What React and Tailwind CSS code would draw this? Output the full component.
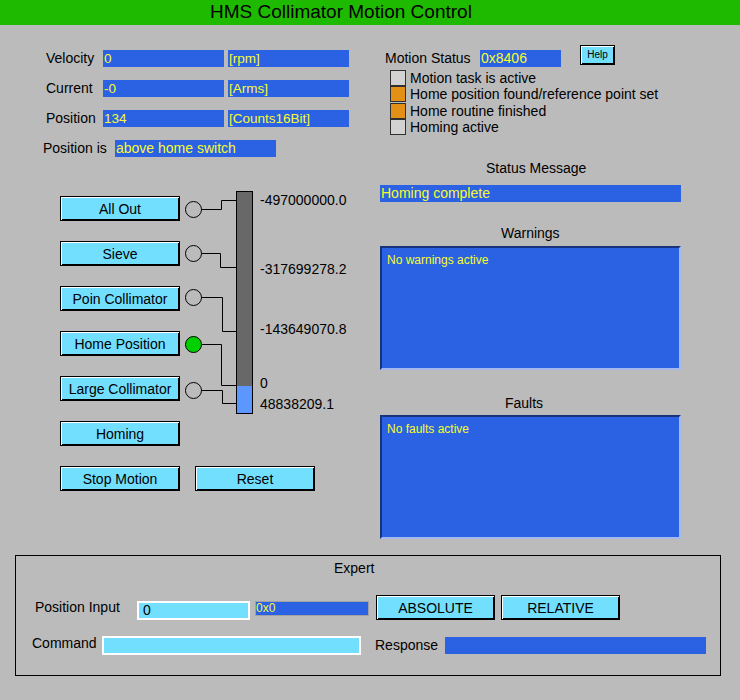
import React from 'react';

const btn =
  'flex items-center justify-center bg-[#73dfff] border border-black shadow-[inset_1px_1px_0_#ffffff,inset_-1px_-1px_0_#000000] text-[14px] leading-none';

const MeterButton = ({ label, className = '' }) => (
  <div className={`${btn} w-[120px] h-[25px] ${className}`}>{label}</div>
);

const Readback = ({ value, className = '' }) => (
  <div className={`h-[17px] bg-[#2a62e3] text-[#fafa2d] text-[13.5px] leading-[17px] pl-[1px] whitespace-nowrap overflow-hidden ${className}`}>
    {value}
  </div>
);

const statusBits = [
  { label: 'Motion task is active', on: false, h: 'h-[17px]' },
  { label: 'Home position found/reference point set', on: true, h: 'h-[16px]' },
  { label: 'Home routine finished', on: true, h: 'h-[17px]' },
  { label: 'Homing active', on: false, h: 'h-[16px]' },
];

const stops = [
  { label: 'All Out', y: 18.5, lx: 41.5, ty: 9.5, lit: false },
  { label: 'Sieve', y: 62.5, lx: 40.5, ty: 76.5, lit: false },
  { label: 'Poin Collimator', y: 106.5, lx: 42.5, ty: 140.5, lit: false },
  { label: 'Home Position', y: 153.5, lx: 41.5, ty: 194.5, lit: true },
  { label: 'Large Collimator', y: 199.5, lx: 42.5, ty: 212.5, lit: false },
];

const ticks = [
  { text: '-497000000.0', top: 'top-[1px]' },
  { text: '-317699278.2', top: 'top-[70px]' },
  { text: '-143649070.8', top: 'top-[130px]' },
  { text: '0', top: 'top-[184px]' },
  { text: '48838209.1', top: 'top-[205px]' },
];

const MessageBox = ({ text }) => (
  <div className="ml-[10px] w-[301px] h-[124px] bg-[#2a62e3] border-2 border-t-[#17337a] border-l-[#17337a] border-b-[#a7b9ec] border-r-[#a7b9ec] pl-[5px] pt-[5px] text-[#fafa2d] text-[12px] leading-[14px]">
    {text}
  </div>
);

export default function App() {
  return (
    <div className="w-[740px] h-[700px] overflow-hidden bg-[#bbbbbb] text-black font-['Liberation_Sans',Arial,sans-serif]">
      <div className="h-[25px] bg-[#1eba00] flex items-center pl-[210px] text-[19px]">
        HMS Collimator Motion Control
      </div>

      <div className="flex items-start">
        {/* left: readbacks and position selector */}
        <div className="w-[370px]">
          {[
            ['Velocity', '0', '[rpm]'],
            ['Current', '-0', '[Arms]'],
            ['Position', '134', '[Counts16Bit]'],
          ].map(([name, value, unit], i) => (
            <div key={name} className={`flex h-[17px] pl-[46px] ${i === 0 ? 'mt-[25px]' : 'mt-[13px]'}`}>
              <div className="w-[57px] text-[14px] leading-[17px]">{name}</div>
              <Readback value={value} className="w-[121px]" />
              <Readback value={unit} className="w-[121px] ml-[4px]" />
            </div>
          ))}
          <div className="flex h-[17px] pl-[43px] mt-[13px]">
            <div className="w-[72px] text-[14px] leading-[17px]">Position is</div>
            <Readback value="above home switch" className="w-[161px] !text-[14px]" />
          </div>

          <div className="flex mt-[34px] h-[223px]">
            <div className="pl-[60px] pt-[5px] flex flex-col gap-[20px]">
              {stops.map((s) => (
                <MeterButton key={s.label} label={s.label} />
              ))}
            </div>
            <svg width="74" height="223" className="block">
              {stops.map((s) => (
                <g key={s.label}>
                  <circle cx="13.5" cy={s.y} r="8" fill={s.lit ? '#00d000' : 'none'} stroke="#000" />
                  <polyline
                    points={`21.5,${s.y} ${s.lx},${s.y} ${s.lx},${s.ty} 56,${s.ty}`}
                    fill="none"
                    stroke="#000"
                  />
                </g>
              ))}
              <rect x="56.5" y="0.5" width="16" height="222" fill="#686868" stroke="#000" />
              <rect x="57" y="195" width="15" height="27" fill="#5b97ff" />
            </svg>
            <div className="relative ml-[6px] w-[100px] text-[14px] leading-[16px]">
              {ticks.map((t) => (
                <div key={t.text} className={`absolute left-0 ${t.top}`}>
                  {t.text}
                </div>
              ))}
            </div>
          </div>

          <MeterButton label="Homing" className="ml-[60px] mt-[7px]" />
          <div className="flex mt-[20px] pl-[60px] gap-[15px]">
            <MeterButton label="Stop Motion" />
            <MeterButton label="Reset" />
          </div>
        </div>

        {/* right: status */}
        <div className="w-[370px]">
          <div className="flex items-start mt-[20px] pl-[15px]">
            <div className="w-[95px] mt-[5px] text-[14px] leading-[17px]">Motion Status</div>
            <Readback value="0x8406" className="w-[81px] mt-[5px] !text-[14px]" />
            <div className={`${btn} ml-[19px] w-[35px] h-[20px] !text-[10px]`}>Help</div>
          </div>
          <div className="mt-[2px] pl-[20px]">
            {statusBits.map((b) => (
              <div key={b.label} className={`flex items-center ${b.h}`}>
                <div className={`w-[16px] h-[16px] border border-[#303030] ${b.on ? 'bg-[#e29016]' : 'bg-[#d2d2d2]'}`} />
                <div className="ml-[4px] text-[14px] leading-[16px]">{b.label}</div>
              </div>
            ))}
          </div>

          <div className="mt-[25px] ml-[116px] text-[14px] leading-[16px]">Status Message</div>
          <Readback value="Homing complete" className="mt-[9px] ml-[10px] w-[301px] !text-[14px]" />

          <div className="mt-[23px] ml-[131px] text-[14px] leading-[16px]">Warnings</div>
          <div className="mt-[5px]">
            <MessageBox text="No warnings active" />
          </div>

          <div className="mt-[25px] ml-[135px] text-[14px] leading-[16px]">Faults</div>
          <div className="mt-[4px]">
            <MessageBox text="No faults active" />
          </div>
        </div>
      </div>

      {/* expert panel */}
      <div className="ml-[15px] mt-[16px] w-[706px] h-[121px] border border-black text-[14px]">
        <div className="ml-[318px] mt-[4px] leading-[16px]">Expert</div>

        <div className="flex items-start mt-[19px] h-[25px]">
          <div className="ml-[19px] w-[102px] mt-[4px] leading-[16px]">Position Input</div>
          <div className="mt-[6px] w-[113px] h-[19px] border-2 border-white bg-[#73dfff] pl-[4px] leading-[15px]">0</div>
          <div className="ml-[5px] mt-[6px] w-[114px] h-[15px] border border-[#a2a2a2] bg-[#2a62e3] text-[#fafa2d] text-[12px] leading-[13px]">
            0x0
          </div>
          <div className={`${btn} ml-[7px] w-[119px] h-[25px]`}>ABSOLUTE</div>
          <div className={`${btn} ml-[6px] w-[119px] h-[25px]`}>RELATIVE</div>
        </div>

        <div className="flex items-start mt-[16px]">
          <div className="ml-[16px] w-[70px] -mt-[1px] leading-[16px]">Command</div>
          <div className="w-[259px] h-[19px] border-2 border-white bg-[#73dfff]" />
          <div className="ml-[14px] w-[70px] mt-[1px] leading-[16px]">Response</div>
          <div className="w-[261px] h-[17px] mt-[1px] bg-[#2a62e3]" />
        </div>
      </div>
    </div>
  );
}
